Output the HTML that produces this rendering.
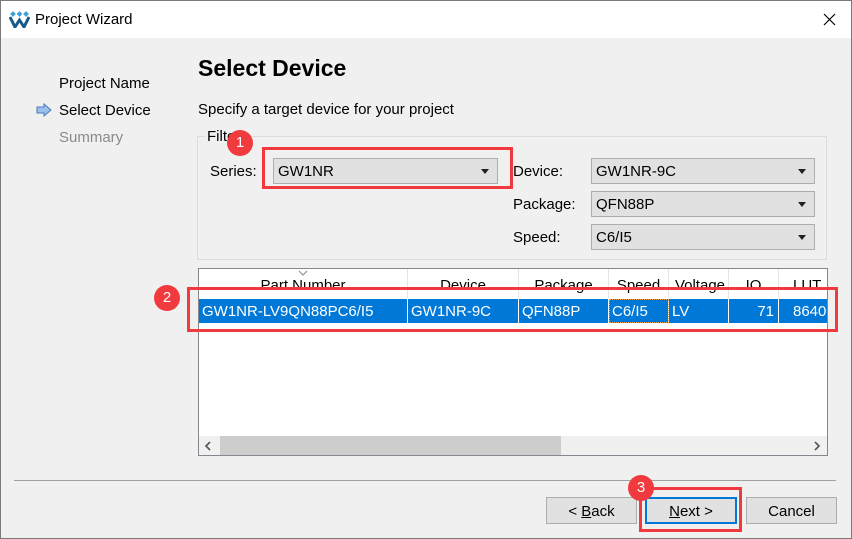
<!DOCTYPE html>
<html><head><meta charset="utf-8"><style>
*{margin:0;padding:0;box-sizing:border-box}
body{width:852px;height:539px;overflow:hidden;background:#f0f0f0;font-family:"Liberation Sans","DejaVu Sans",sans-serif;font-size:15px;color:#000;position:relative}
.a{position:absolute;white-space:nowrap}
.win{position:absolute;left:0;top:0;width:852px;height:539px;border:1px solid #7a7a7a}
.combo{position:absolute;background:#e1e1e1;border:1px solid #adadad;height:26px;padding-left:4px;line-height:26px}
.combo:after{content:"";position:absolute;right:8px;top:10px;border-left:4px solid transparent;border-right:4px solid transparent;border-top:5px solid #222}
.red{position:absolute;border:3px solid #f03a3e}
.badge{position:absolute;width:26px;height:26px;border-radius:50%;background:#f03a3e;color:#fff;text-align:center;line-height:26px;font-size:15px}
.btn{position:absolute;top:497px;height:27px;background:#e1e1e1;border:1px solid #adadad;text-align:center;line-height:27px}
.th{position:absolute;top:269px;height:29px;line-height:33px;text-align:center;overflow:hidden}
.td{position:absolute;top:299px;height:24px;line-height:25px;color:#fff;padding-left:3px;border-right:1px solid #fff;overflow:hidden}
</style></head><body>
<div class="a" style="left:0;top:0;width:852px;height:38px;background:#fff"></div>
<svg class="a" style="left:9px;top:10px" width="21" height="18" viewBox="0 0 21 18">
<g fill="#3aa0d8"><rect x="2" y="2" width="4" height="4" transform="rotate(45 4 4)"/><rect x="8.5" y="2" width="4" height="4" transform="rotate(45 10.5 4)"/><rect x="15" y="2" width="4" height="4" transform="rotate(45 17 4)"/></g>
<path d="M1 7 L6 17 L10.5 10 L15 17 L20 7" fill="none" stroke="#1a5a8a" stroke-width="3"/></svg>
<div class="a" style="left:35px;top:11px;font-size:15px">Project Wizard</div>
<svg class="a" style="left:823px;top:13px" width="13" height="13"><path d="M1 1L12 12M12 1L1 12" stroke="#000" stroke-width="1.2"/></svg>

<div class="a" style="left:59px;top:75px">Project Name</div>
<svg class="a" style="left:36px;top:103px" width="16" height="14"><path d="M1 4H8V1L15 7L8 13V10H1Z" fill="#9cc0ec" stroke="#4a7ac0"/></svg>
<div class="a" style="left:59px;top:102px">Select Device</div>
<div class="a" style="left:59px;top:129px;color:#8a8a8a">Summary</div>

<div class="a" style="left:198px;top:55px;font-size:23px;font-weight:bold">Select Device</div>
<div class="a" style="left:198px;top:101px">Specify a target device for your project</div>

<div class="a" style="left:197px;top:136px;width:630px;height:124px;border:1px solid #dcdcdc"></div>
<div class="a" style="left:205px;top:128px;background:#f0f0f0;padding:0 2px">Filter</div>
<div class="a" style="left:210px;top:163px">Series:</div>
<div class="combo" style="left:273px;top:158px;width:225px">GW1NR</div>
<div class="a" style="left:513px;top:163px">Device:</div>
<div class="combo" style="left:591px;top:158px;width:224px">GW1NR-9C</div>
<div class="a" style="left:513px;top:196px">Package:</div>
<div class="combo" style="left:591px;top:191px;width:224px">QFN88P</div>
<div class="a" style="left:513px;top:229px">Speed:</div>
<div class="combo" style="left:591px;top:224px;width:224px">C6/I5</div>
<div class="red" style="left:262px;top:147px;width:251px;height:42px"></div>
<div class="badge" style="left:227px;top:130px">1</div>

<div class="a" style="left:198px;top:268px;width:630px;height:188px;background:#fff;border:1px solid #828790"></div>
<div class="th" style="left:199px;width:209px;border-right:1px solid #e5e5e5">Part Number</div>
<svg class="a" style="left:298px;top:270px" width="10" height="6"><path d="M1 1L5 5L9 1" fill="none" stroke="#888"/></svg>
<div class="th" style="left:408px;width:111px;border-right:1px solid #e5e5e5">Device</div>
<div class="th" style="left:519px;width:90px;border-right:1px solid #e5e5e5">Package</div>
<div class="th" style="left:609px;width:60px;border-right:1px solid #e5e5e5">Speed</div>
<div class="th" style="left:669px;width:60px;border-right:1px solid #e5e5e5;text-align:right;padding-right:3px">Voltage</div>
<div class="th" style="left:729px;width:50px;border-right:1px solid #e5e5e5">IO</div>
<div class="th" style="left:779px;width:47px;padding-left:14px;text-align:left">LUT</div>
<div class="a" style="left:199px;top:299px;width:628px;height:24px;background:#0078d7"></div>
<div class="td" style="left:199px;width:209px">GW1NR-LV9QN88PC6/I5</div>
<div class="td" style="left:408px;width:111px">GW1NR-9C</div>
<div class="td" style="left:519px;width:90px">QFN88P</div>
<div class="td" style="left:609px;width:60px;outline:1px dotted #f0a040;outline-offset:-1px">C6/I5</div>
<div class="td" style="left:669px;width:60px">LV</div>
<div class="td" style="left:729px;width:50px;text-align:right;padding-right:4px">71</div>
<div class="td" style="left:779px;width:48px;padding-left:14px;border:none">8640</div>
<div class="red" style="left:187px;top:287px;width:651px;height:45px"></div>
<div class="badge" style="left:154px;top:285px">2</div>
<div class="a" style="left:199px;top:436px;width:628px;height:19px;background:#f0f0f0"></div>
<div class="a" style="left:220px;top:436px;width:341px;height:19px;background:#cdcdcd"></div>
<svg class="a" style="left:204px;top:441px" width="8" height="10"><path d="M6 1L2 5L6 9" fill="none" stroke="#555" stroke-width="1.6"/></svg>
<svg class="a" style="left:813px;top:441px" width="8" height="10"><path d="M2 1L6 5L2 9" fill="none" stroke="#555" stroke-width="1.6"/></svg>

<div class="a" style="left:14px;top:480px;width:822px;height:1px;background:#a0a0a0"></div>
<div class="btn" style="left:546px;width:91px">&lt; <u>B</u>ack</div>
<div class="btn" style="left:645px;width:92px;border:2px solid #0078d7;line-height:25px"><u>N</u>ext &gt;</div>
<div class="btn" style="left:746px;width:91px">Cancel</div>
<div class="red" style="left:639px;top:487px;width:103px;height:45px"></div>
<div class="badge" style="left:628px;top:475px">3</div>
<div class="win"></div>
</body></html>
